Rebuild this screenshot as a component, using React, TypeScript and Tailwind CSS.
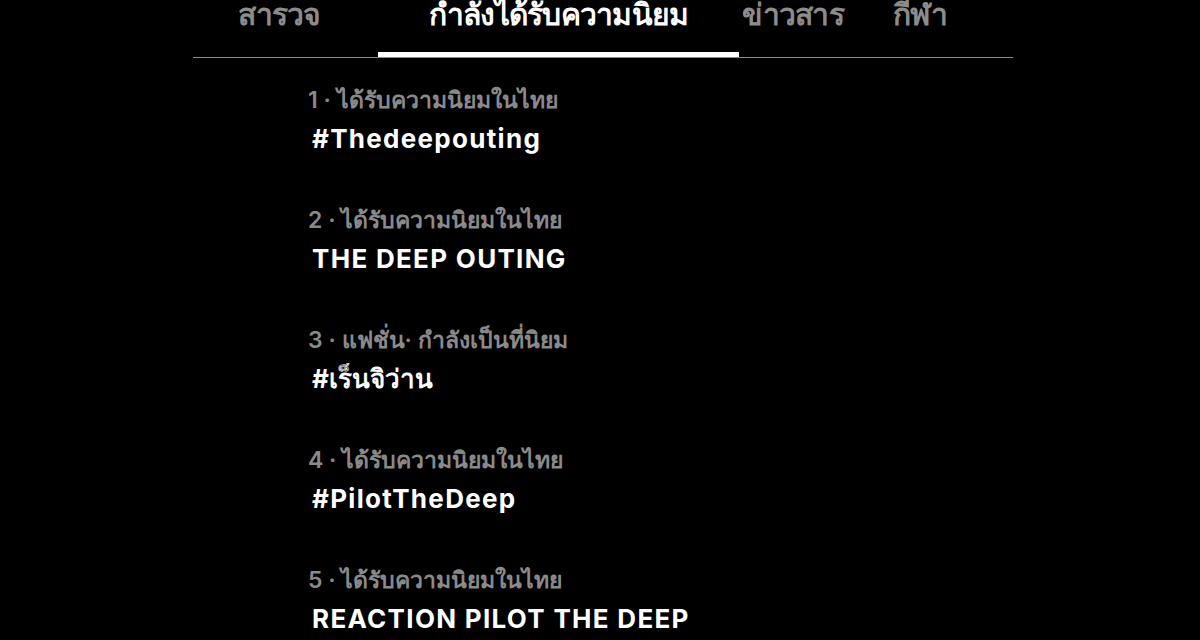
const tabs = [
  { label: "สารวจ", w: "w-[185px] pr-[12px]", active: false },
  { label: "กำลังได้รับความนิยม", w: "w-[361px]", active: true },
  { label: "ข่าวสาร", w: "w-[108px]", active: false },
  { label: "กีฬา", w: "w-[146px]", active: false },
];

const trends = [
  { meta: "1 · ได้รับความนิยมในไทย", title: "#Thedeepouting", thai: false },
  { meta: "2 · ได้รับความนิยมในไทย", title: "THE DEEP OUTING", thai: false },
  { meta: "3 · แฟชั่น· กำลังเป็นที่นิยม", title: "#เร็นจิว่าน", thai: true },
  { meta: "4 · ได้รับความนิยมในไทย", title: "#PilotTheDeep", thai: false },
  { meta: "5 · ได้รับความนิยมในไทย", title: "REACTION PILOT THE DEEP", thai: false },
];

export default function App() {
  return (
    <div className="w-[1200px] h-[640px] overflow-hidden bg-black font-['Inter','Noto_Sans',sans-serif]">
      <div className="w-[820px] ml-[193px]">
        <div className="flex border-b border-[#8a8a8a] -mt-[24px]">
          {tabs.map((t) => (
            <div key={t.label} className={`${t.w} flex flex-col items-center`}>
              <span
                className={`h-[76px] flex items-center text-[30px] leading-none tracking-tight font-semibold ${
                  t.active ? "text-white" : "text-[#8c8c8c]"
                }`}
              >
                {t.label}
              </span>
              <div className={`h-[5px] w-full ${t.active ? "bg-white" : "bg-transparent"}`} />
            </div>
          ))}
        </div>
        <div className="pl-[115px] pt-[26px] flex flex-col">
          {trends.map((t) => (
            <div key={t.title} className="h-[120px] flex flex-col">
              <span className="text-[23px] leading-[32px] text-[#8a8a8a] font-semibold">{t.meta}</span>
              <span
                className={`text-[26px] leading-[46px] text-white font-bold pl-[4px] ${
                  t.thai ? "tracking-normal" : "tracking-[0.05em]"
                }`}
              >
                {t.title}
              </span>
            </div>
          ))}
        </div>
      </div>
    </div>
  );
}
